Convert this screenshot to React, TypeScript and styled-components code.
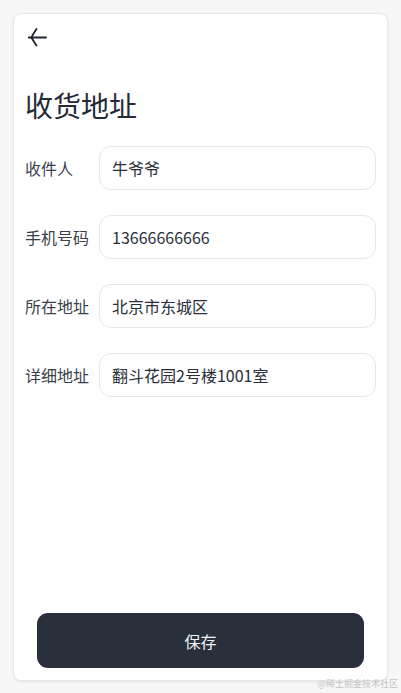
import React from "react";
import styled, { createGlobalStyle } from "styled-components";

const Global = createGlobalStyle`
  html, body { margin: 0; padding: 0; background: #f7f7f7; }
  body { font-family: "Noto Sans CJK SC", "Noto Sans", sans-serif; }
  * { box-sizing: border-box; }
`;

const Page = styled.div`
  width: 401px;
  height: 693px;
  padding: 13px 13px 12px 13px;
  position: relative;
  display: flex;
`;

const Card = styled.div`
  flex: 1;
  background: #fff;
  border: 1px solid #e8e8e8;
  border-radius: 8px;
  box-shadow: 0 1px 3px rgba(0, 0, 0, 0.08);
  display: flex;
  flex-direction: column;
  padding: 12px 11px 12px 11px;
`;

const BackButton = styled.button`
  width: 24px;
  height: 24px;
  padding: 0;
  margin: 1px 0 0 2px;
  border: none;
  background: none;
  display: flex;
  align-items: center;
  justify-content: center;
  color: #1f2430;
`;

const Title = styled.h1`
  margin: 35px 0 0 0;
  font-size: 28px;
  font-weight: 400;
  line-height: 38px;
  color: #252a35;
`;

const Form = styled.div`
  margin-top: 22px;
  display: flex;
  flex-direction: column;
  gap: 25px;
`;

const Row = styled.div`
  display: flex;
  align-items: center;
`;

const Label = styled.label`
  width: 74px;
  flex-shrink: 0;
  font-size: 16px;
  color: #3a3f4a;
`;

const Input = styled.input`
  flex: 1;
  min-width: 0;
  height: 44px;
  border: 1px solid #e6e7ea;
  border-radius: 12px;
  padding: 0 12px;
  font-family: "Noto Sans CJK SC", "Noto Sans", sans-serif;
  font-size: 16px;
  color: #2a2f3a;
  background: #fff;
  outline: none;
`;

const SaveButton = styled.button`
  margin: auto 12px 0 12px;
  height: 55px;
  border: none;
  border-radius: 11px;
  background: #2a2f3c;
  color: #f1f3f7;
  font-family: "Noto Sans CJK SC", "Noto Sans", sans-serif;
  font-size: 16px;
`;

const Watermark = styled.span`
  position: absolute;
  right: 3px;
  bottom: 3px;
  font-family: "Noto Sans CJK SC", serif;
  font-size: 9px;
  color: #c4c4c4;
`;

const fields = [
  { label: "收件人", value: "牛爷爷" },
  { label: "手机号码", value: "13666666666" },
  { label: "所在地址", value: "北京市东城区" },
  { label: "详细地址", value: "翻斗花园2号楼1001室" },
];

export default function App() {
  return (
    <>
      <Global />
      <Page>
        <Card>
          <BackButton aria-label="返回">
            <svg width="22" height="22" viewBox="0 0 22 22" fill="none">
              <path d="M0.5 9.5 H18" stroke="currentColor" strokeWidth="1.8" strokeLinecap="round" />
              <path d="M8.5 1 C6.5 4 4.5 7 3.5 9.5 C5 12.5 7 15 8.5 17.5" stroke="currentColor" strokeWidth="1.8" strokeLinecap="round" strokeLinejoin="round" />
            </svg>
          </BackButton>
          <Title>收货地址</Title>
          <Form>
            {fields.map((f) => (
              <Row key={f.label}>
                <Label>{f.label}</Label>
                <Input defaultValue={f.value} />
              </Row>
            ))}
          </Form>
          <SaveButton>保存</SaveButton>
        </Card>
        <Watermark>@稀土掘金技术社区</Watermark>
      </Page>
    </>
  );
}
